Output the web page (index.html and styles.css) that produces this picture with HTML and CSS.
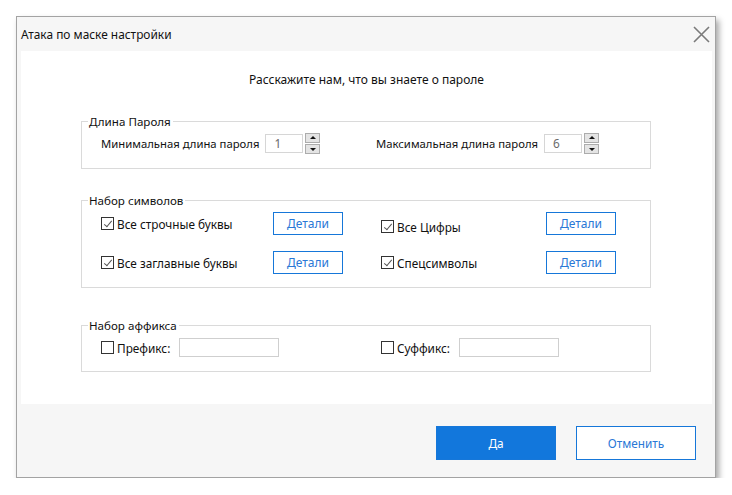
FILE: index.html
```html
<!DOCTYPE html>
<html lang="ru">
  <head>
    <meta charset="UTF-8" />
    <title>Атака по маске настройки</title>
    <link rel="stylesheet" href="styles.css">
  </head>
  <body>
    <div class="window">
      <div class="titlebar">
        <span class="title">Атака по маске настройки</span>
        <span class="close">
          <svg width="17" height="17" viewBox="0 0 17 17">
            <path d="M1 1 L16 16 M16 1 L1 16" stroke="#7a7a7a" stroke-width="1.6" fill="none" />
          </svg>
        </span>
      </div>

      <div class="content">
        <p class="intro">Расскажите нам, что вы знаете о пароле</p>

        <!-- password length -->
        <fieldset class="group len">
          <legend>Длина Пароля</legend>
          <div class="cols">
            <div class="field">
              <span>Минимальная длина пароля</span>
              <span class="num">1</span>
              <span class="spin"><b class="up"></b><b class="down"></b></span>
            </div>
            <div class="field">
              <span>Максимальная длина пароля</span>
              <span class="num">6</span>
              <span class="spin"><b class="up"></b><b class="down"></b></span>
            </div>
          </div>
        </fieldset>

        <!-- charset -->
        <fieldset class="group chars">
          <legend>Набор символов</legend>
          <div class="cols">
            <div class="cell">
              <label class="check"><span class="box on"></span>Все строчные буквы</label>
              <button class="details">Детали</button>
            </div>
            <div class="cell">
              <label class="check low"><span class="box on"></span>Все Цифры</label>
              <button class="details">Детали</button>
            </div>
            <div class="cell">
              <label class="check"><span class="box on"></span>Все заглавные буквы</label>
              <button class="details">Детали</button>
            </div>
            <div class="cell">
              <label class="check"><span class="box on"></span>Спецсимволы</label>
              <button class="details">Детали</button>
            </div>
          </div>
        </fieldset>

        <!-- affix -->
        <fieldset class="group affix">
          <legend>Набор аффикса</legend>
          <div class="cols">
            <div class="cell">
              <label class="check"><span class="box"></span>Префикс:</label>
              <span class="text"></span>
            </div>
            <div class="cell">
              <label class="check"><span class="box"></span>Суффикс:</label>
              <span class="text"></span>
            </div>
          </div>
        </fieldset>
      </div>

      <div class="footer">
        <button class="btn primary">Да</button>
        <button class="btn">Отменить</button>
      </div>
    </div>
  </body>
</html>
```

FILE: styles.css
```css
body {
  margin: 0;
  background: #ffffff;
  font-family: "Noto Sans", "DejaVu Sans", sans-serif;
  font-size: 11.5px;
  color: #111111;
}

.window {
  margin: 16px 0 0 16px;
  width: 698px;
  height: 460px;
  border: 1px solid #a3a3a3;
  background: #f6f6f6;
  box-shadow: 3px 4px 6px rgba(0, 0, 0, 0.35);
  display: flex;
  flex-direction: column;
}

/* title bar */
.titlebar {
  height: 34px;
  display: flex;
  align-items: center;
  justify-content: space-between;
  padding: 0 5px 0 4px;
  font-size: 11.9px;
}
.close {
  display: flex;
  margin-top: 1px;
}

.content {
  margin: 0 3px 0 4px;
  height: 353px;
  background: #ffffff;
  padding-top: 20px;
  box-sizing: border-box;
}
.intro {
  margin: 0 0 26px 0;
  text-align: center;
  font-size: 12px;
}

/* group boxes */
.group {
  margin: 0 0 0 60px;
  width: 570px;
  box-sizing: border-box;
  border: 1px solid #dadada;
  padding: 0 0 0 19px;
}
.group legend {
  padding: 0 2px 0 1px;
  margin-left: -13px;
  font-size: 11.6px;
}
.cols {
  display: grid;
  grid-template-columns: 280px 1fr;
}
.len .cols {
  grid-template-columns: 275px 1fr;
}
.len {
  padding-top: 4px;
  padding-bottom: 14px;
}
.chars {
  margin-top: 24px;
  padding-top: 4px;
  padding-bottom: 13px;
}
.chars .cols {
  row-gap: 16px;
}
.affix {
  margin-top: 30px;
  padding-top: 5px;
  padding-bottom: 14px;
}

.field {
  display: flex;
  align-items: center;
  gap: 6px;
  font-size: 11.3px;
}
.num {
  width: 38px;
  height: 19px;
  box-sizing: border-box;
  border: 1px solid #d6d6d6;
  padding-left: 8px;
  line-height: 17px;
  color: #6a6a6a;
  font-size: 11.8px;
}
.spin {
  display: flex;
  flex-direction: column;
  gap: 1px;
  margin-left: -4px;
}
.spin b {
  width: 15px;
  height: 10px;
  box-sizing: border-box;
  border: 1px solid #acacac;
  background: #e4e4e4;
  position: relative;
}
.spin b::after {
  content: "";
  position: absolute;
  left: 4px;
  border-left: 3px solid transparent;
  border-right: 3px solid transparent;
}
.spin .up::after {
  top: 2px;
  border-bottom: 3px solid #111;
}
.spin .down::after {
  top: 3px;
  border-top: 3px solid #111;
}

.cell {
  display: flex;
  align-items: center;
}
.check {
  display: flex;
  align-items: center;
  gap: 3px;
  width: 172px;
  font-size: 11.8px;
}
.chars .cell:nth-child(even) .check {
  width: 165px;
}
.affix .check {
  width: 78px;
}
.check.low {
  margin-top: 6px;
}
.box {
  width: 13px;
  height: 13px;
  box-sizing: border-box;
  border: 1px solid #333333;
  background: #ffffff;
  position: relative;
}
.box.on::after {
  content: "";
  position: absolute;
  left: 3.5px;
  top: 0.5px;
  width: 3px;
  height: 7px;
  border-right: 1.3px solid #555;
  border-bottom: 1.3px solid #555;
  transform: rotate(40deg);
}

.details {
  width: 70px;
  height: 23px;
  border: 1px solid #1677d9;
  background: #ffffff;
  color: #2a78d6;
  font-family: inherit;
  font-size: 12px;
  padding: 0;
}
.text {
  width: 100px;
  height: 19px;
  box-sizing: border-box;
  border: 1px solid #cfcfcf;
}

/* footer buttons */
.footer {
  flex: 1;
  display: flex;
  justify-content: flex-end;
  gap: 20px;
  padding: 22px 19px 0 0;
}
.btn {
  width: 120px;
  height: 34px;
  border: 1px solid #1677d9;
  background: #ffffff;
  color: #2a78d6;
  font-family: inherit;
  font-size: 11.8px;
}
.btn.primary {
  background: #1277dc;
  color: #ffffff;
}
```
